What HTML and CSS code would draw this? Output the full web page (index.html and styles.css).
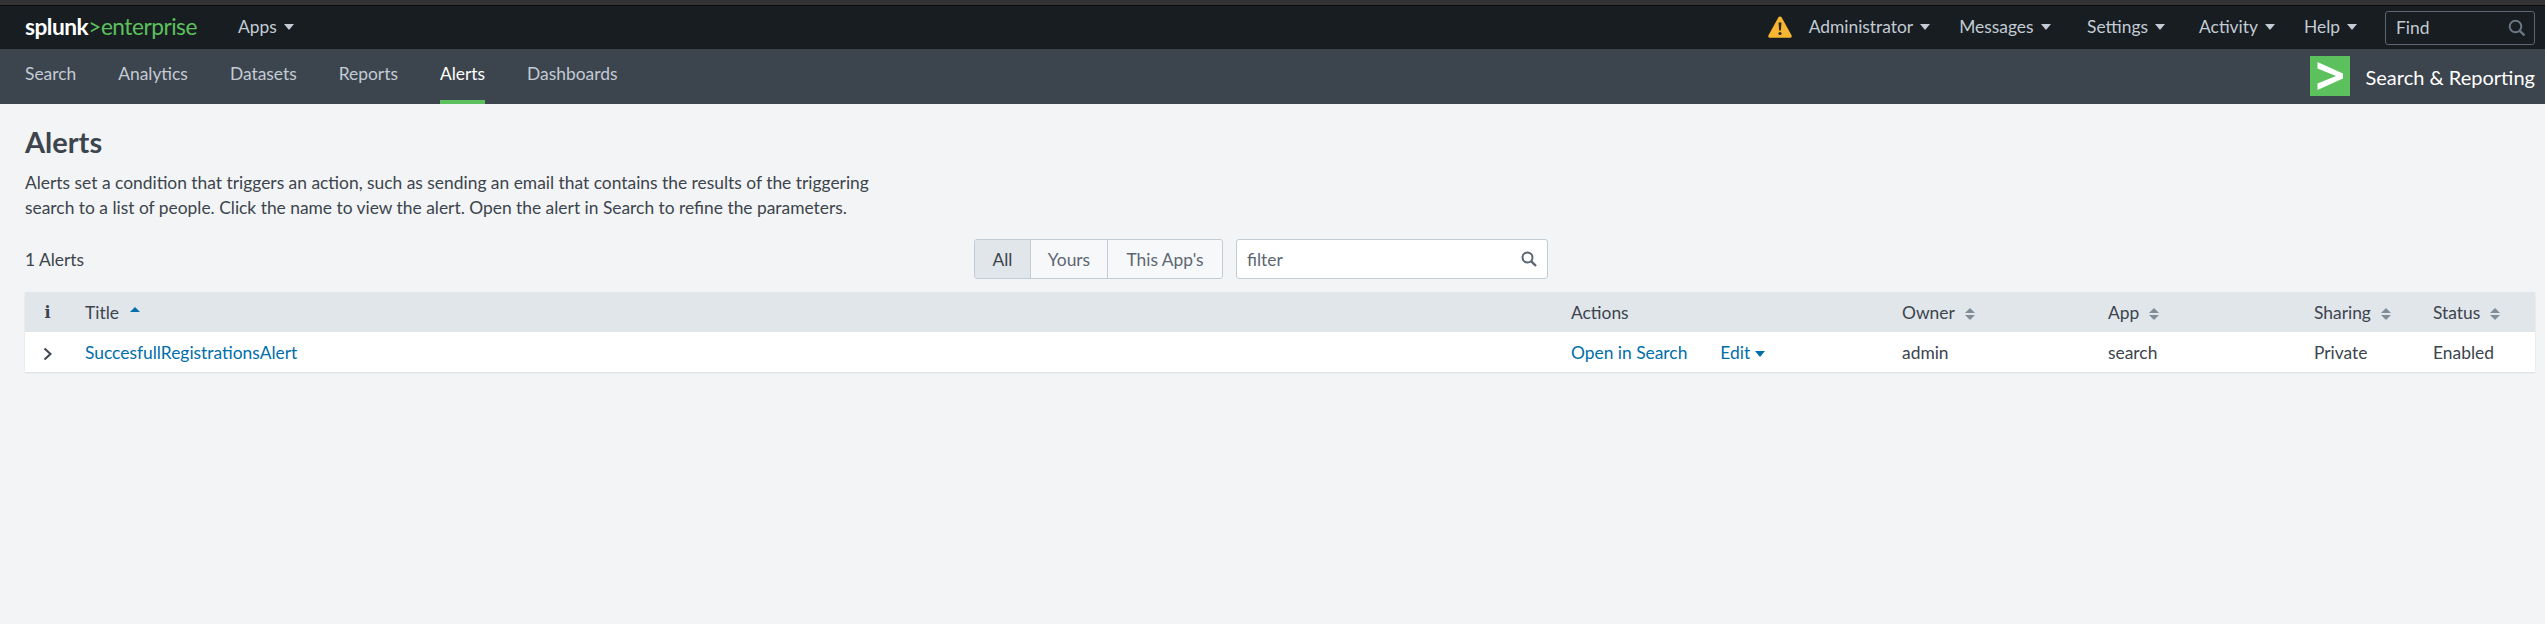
FILE: index.html
```html
<!DOCTYPE html>
<html lang="en">
<head>
<meta charset="utf-8">
<title>Alerts | Splunk</title>
<link rel="stylesheet" href="styles.css">
</head>
<body>
<div class="strip"></div>
<header class="topbar">
  <a class="logo"><span class="logo-splunk">splunk</span><span class="logo-green">&gt;enterprise</span></a>
  <a class="top-item apps">Apps<i class="caret"></i></a>
  <div class="top-right">
    <svg class="warn" width="24" height="22" viewBox="0 0 24 22"><path d="M12 0.5c.8 0 1.3.4 1.7 1.1l9.8 17.6c.7 1.3 0 2.5-1.5 2.5H2c-1.5 0-2.2-1.2-1.5-2.5L10.300 1.600C10.700.9 11.200.5 12 .5z" fill="#f8b52f"/><path d="M10.600 6.500h2.800l-.5 8h-1.800z" fill="#2b2a20"/><circle cx="12" cy="17.500" r="1.600" fill="#2b2a20"/></svg>
    <a class="top-item admin">Administrator<i class="caret"></i></a>
    <a class="top-item messages">Messages<i class="caret"></i></a>
    <a class="top-item settings">Settings<i class="caret"></i></a>
    <a class="top-item activity">Activity<i class="caret"></i></a>
    <a class="top-item help">Help<i class="caret"></i></a>
    <div class="find"><span>Find</span>
      <svg width="18" height="18" viewBox="0 0 18 18" class="find-icon"><circle cx="7.500" cy="7.500" r="5.800" fill="none" stroke="#6b7785" stroke-width="2"/><path d="M11.800 11.800L16.500 16.500" stroke="#6b7785" stroke-width="2.400"/></svg>
    </div>
  </div>
</header>
<nav class="appbar">
  <a class="nav-item">Search</a>
  <a class="nav-item">Analytics</a>
  <a class="nav-item">Datasets</a>
  <a class="nav-item">Reports</a>
  <a class="nav-item active">Alerts</a>
  <a class="nav-item">Dashboards</a>
  <div class="app-label">
    <svg class="app-icon" width="40" height="40" viewBox="0 0 40 40"><rect width="40" height="40" fill="#5cc05c"/><path d="M7.500 6L33 17.500v5L7.500 34v-6.500L26 20 7.500 12.500z" fill="#fff"/></svg>
    <span>Search &amp; Reporting</span>
  </div>
</nav>
<main class="content">
  <h1 class="title">Alerts</h1>
  <p class="desc">Alerts set a condition that triggers an action, such as sending an email that contains the results of the triggering search to a list of people. Click the name to view the alert. Open the alert in Search to refine the parameters.</p>
  <div class="toolbar">
    <div class="count">1 Alerts</div>
    <div class="btn-group">
      <button class="btn btn-all">All</button>
      <button class="btn btn-yours">Yours</button>
      <button class="btn btn-app">This App's</button>
    </div>
    <div class="filter"><span>filter</span>
      <svg width="16" height="16" viewBox="0 0 16 16"><circle cx="6.500" cy="6.500" r="5" fill="none" stroke="#5c6773" stroke-width="2"/><path d="M10.300 10.300L15 15" stroke="#5c6773" stroke-width="2.400"/></svg>
    </div>
  </div>
  <table class="grid">
    <colgroup><col class="c-i"><col class="c-title"><col class="c-actions"><col class="c-owner"><col class="c-app"><col class="c-sharing"><col class="c-status"></colgroup>
    <thead>
      <tr>
        <th class="info">i</th>
        <th>Title<i class="sort-up"></i></th>
        <th>Actions</th>
        <th>Owner<i class="sort"></i></th>
        <th>App<i class="sort"></i></th>
        <th>Sharing<i class="sort"></i></th>
        <th>Status<i class="sort"></i></th>
      </tr>
    </thead>
    <tbody>
      <tr>
        <td class="expand"><svg width="12" height="14" viewBox="0 0 12 14"><path d="M2.500 1.500L8.500 7l-6 5.500" fill="none" stroke="#3c444d" stroke-width="2"/></svg></td>
        <td><a class="link">SuccesfullRegistrationsAlert</a></td>
        <td><a class="link open">Open in Search</a><a class="link">Edit<i class="caret caret-blue"></i></a></td>
        <td>admin</td>
        <td>search</td>
        <td>Private</td>
        <td>Enabled</td>
      </tr>
    </tbody>
  </table>
</main>
</body>
</html>
```
FILE: styles.css
```css
* { box-sizing: border-box; }
html, body { margin: 0; height: 100%; overflow: hidden; }
body { background: #f2f4f5; color: #3c444d; font-family: Lato, "Open Sans", sans-serif; font-size: 17.4px; }

.strip { height: 6px; background: #333; border-bottom: 1px solid #0b0c0e; }

.topbar { height: 43px; background: #171d21; display: flex; align-items: center; padding: 0 10px 2px 25px; }
.logo { display: flex; align-items: baseline; font-size: 22.7px; letter-spacing: -0.5px; width: 213px; }
.logo-splunk { color: #fff; font-weight: 700; }
.logo-green { color: #5cc05c; }
.top-item { color: #c3cbd4; display: inline-flex; align-items: center; white-space: nowrap; }
.top-right { margin-left: auto; display: flex; align-items: center; }
.warn { margin-right: 17px; }
.admin { margin-right: 29px; }
.messages { margin-right: 36.500px; }
.settings { margin-right: 34px; }
.activity { margin-right: 29px; }
.help { margin-right: 28px; }
.caret { display: inline-block; width: 0; height: 0; margin-left: 7px; border-left: 5px solid transparent; border-right: 5px solid transparent; border-top: 6px solid currentColor; }
.caret-blue { margin-left: 5px; vertical-align: 2px; }

.find { width: 150px; height: 34px; margin-top: 2px; border: 1px solid #5c6773; border-radius: 3px; display: flex; align-items: center; justify-content: space-between; padding: 0 8px 0 10px; color: #c3cbd4; }

.appbar { height: 55px; background: #3c444d; display: flex; align-items: stretch; padding: 0 10px 0 25px; gap: 42px; }
.nav-item { color: #c3cbd4; line-height: 49px; border-bottom: 4px solid transparent; height: 55px; }
.nav-item.active { color: #fff; border-bottom-color: #5cc05c; }
.app-label { margin-left: auto; display: flex; align-items: center; gap: 16px; color: #fff; font-size: 20px; }
.app-icon { margin-top: -1px; }

.content { padding: 0 10px 0 25px; }
.title { margin: 0; padding-top: 20px; font-size: 29px; line-height: 36px; font-weight: 700; color: #3c444d; }
.desc { margin: 10px 0 0; width: 870px; line-height: 25px; color: #3c444d; }

.toolbar { display: flex; align-items: center; margin-top: 19px; height: 40px; }
.count { width: 949px; }
.btn-group { display: flex; height: 40px; border: 1px solid #c3cbd4; border-radius: 3px; width: 249px; }
.btn { font: inherit; color: #5c6773; background: #f7f8fa; border: 0; border-right: 1px solid #c3cbd4; padding: 0; }
.btn:last-child { border-right: 0; border-radius: 0 3px 3px 0; }
.btn-all { width: 56px; background: #e1e6eb; color: #3c444d; border-radius: 3px 0 0 3px; }
.btn-yours { width: 77px; }
.btn-app { flex: 1; }
.filter { margin-left: 13px; width: 312px; height: 40px; background: #fff; border: 1px solid #c3cbd4; border-radius: 3px; display: flex; align-items: center; justify-content: space-between; padding: 0 10px; color: #5c6773; }

.grid { margin-top: 13px; width: 2510px; table-layout: fixed; border-collapse: collapse; background: #fff; box-shadow: 0 1px 2px rgba(0,0,0,.1); }
.c-i { width: 60px; }
.c-title { width: 1486px; }
.c-actions { width: 331px; }
.c-owner { width: 206px; }
.c-app { width: 206px; }
.c-sharing { width: 119px; }
.c-status { width: 102px; }
th, td { padding: 0; height: 40px; text-align: left; font-weight: 400; white-space: nowrap; }
th { background: #e1e6eb; color: #3c444d; }
th.info { text-align: center; font-family: "DejaVu Serif", serif; font-weight: 700; font-size: 16px; padding-right: 15px; }
td.expand { text-align: center; padding-right: 14px; }
td.expand svg { display: inline-block; vertical-align: middle; }
.link { color: #006eaa; }
.open { margin-right: 33px; }
.sort { display: inline-block; margin-left: 10px; width: 0; height: 12px; vertical-align: -1px; position: relative; }
.sort::before, .sort::after { content: ""; position: absolute; left: 0; border-left: 5px solid transparent; border-right: 5px solid transparent; }
.sort::before { top: 0; border-bottom: 5px solid #818d99; }
.sort::after { top: 7px; border-top: 5px solid #818d99; }
.sort-up { display: inline-block; margin-left: 11px; width: 0; height: 0; vertical-align: 7px; border-left: 5px solid transparent; border-right: 5px solid transparent; border-bottom: 5px solid #006eaa; }
```
